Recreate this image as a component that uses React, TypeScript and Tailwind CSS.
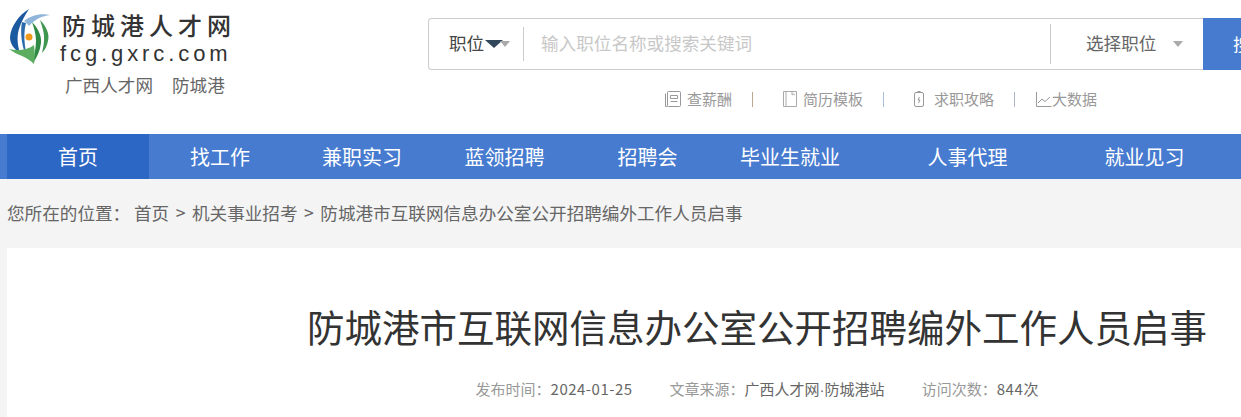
const cjk = "font-['Microsoft_YaHei','Noto_Sans_CJK_SC','Noto_Sans',sans-serif]";

const navItems = [
  { name: "首页", width: "w-[142px]", active: true },
  { name: "找工作", width: "w-[142px]" },
  { name: "兼职实习", width: "w-[142px]" },
  { name: "蓝领招聘", width: "w-[143px]" },
  { name: "招聘会", width: "w-[143px]" },
  { name: "毕业生就业", width: "w-[142px]" },
  { name: "人事代理", width: "w-[213px]" },
  { name: "就业见习", width: "w-[141px]" },
];

const Logo = () => (
  <svg width="42" height="58" viewBox="0 0 42 58" className="shrink-0">
    <path d="M20 1 C10 7 2 18 1 29 C1 36 5 41 11 45 C8 36 8 27 10 21 C12 14 16 7 20 1Z" fill="#1c5a9f" />
    <path d="M13 14 C11 24 13 36 15 42 C16 43 17 42 16 38 C15 30 15 22 17 15Z" fill="#2a6cab" />
    <path d="M15 13 C22 7 32 5 41 7 C33 8 26 11 20 18 C18 16 17 14 15 13Z" fill="#8fb6da" />
    <path d="M23 14 C28 19 33 27 32 35 C31 43 28 49 24 55 C25 47 27 40 27 33 C27 26 25 20 23 14Z" fill="#2f8a45" />
    <path d="M31 12 C37 18 41 26 39 33 C38 38 36 42 33 45 C35 37 36 29 34 22 C33 18 32 15 31 12Z" fill="#3f9650" />
    <path d="M0 41 C9 43 19 42 25 37 C26 44 26 50 25 56 C22 53 18 50 13 48 C8 46 4 44 0 41Z" fill="#5bae60" />
    <circle cx="20" cy="29" r="3.5" fill="#f09a1a" />
  </svg>
);

const Header = () => (
  <header className="flex h-[134px] bg-white">
    <div className="w-[428px] shrink-0 pl-[9px] pt-[8px]">
      <div className="flex gap-[11px]">
        <Logo />
        <div className="pt-[2px]">
          <div className={`${cjk} h-[31px] text-[24px] leading-[30px] tracking-[5px] font-medium text-[#333] whitespace-nowrap`}>防城港人才网</div>
          <div className="font-['Liberation_Sans',sans-serif] -ml-[2px] h-[24px] text-[22px] leading-[26px] tracking-[3.9px] text-[#333] whitespace-nowrap">fcg.gxrc.com</div>
        </div>
      </div>
      <div className={`${cjk} ml-[56px] mt-[7px] flex gap-[19px] text-[17.6px] leading-[24px] text-[#666]`}>
        <span>广西人才网</span>
        <span>防城港</span>
      </div>
    </div>
    <div className="w-[813px] shrink-0 pt-[18px]">
      <div className={`${cjk} flex h-[52px] items-center rounded-l-[4px] border border-r-0 border-[#ccc] text-[17.6px] text-[#666]`}>
        <div className="flex h-[34px] w-[95px] items-center border-r border-[#ccc] pl-[20px]">
          <span className="pb-[2px] text-[#444]">职位</span>
          <span className="ml-[1px] h-0 w-0 border-x-[9px] border-t-[8px] border-x-transparent border-t-[#33475b]" />
          <span className="-ml-[3px] h-0 w-0 border-x-[5px] border-t-[6px] border-x-transparent border-t-[#aaa]" />
        </div>
        <div className="flex-1 pb-[2px] pl-[17px] text-[#c8c8c8]">输入职位名称或搜索关键词</div>
        <div className="flex h-[40px] w-[153px] items-center border-l border-[#ccc] pl-[35px]">
          <span className="pb-[2px]">选择职位</span>
          <span className="ml-[17px] h-0 w-0 border-x-[5px] border-t-[6px] border-x-transparent border-t-[#aaa]" />
        </div>
        <div className="flex h-[52px] w-[38px] shrink-0 items-center overflow-hidden whitespace-nowrap bg-[#467bd0] pl-[30px] text-white">搜索</div>
      </div>
      <div className={`${cjk} ml-[236px] mt-[19px] flex items-center text-[15px] leading-[20px] text-[#999]`}>
        <svg width="18" height="18" viewBox="0 0 18 18" fill="none" stroke="#999" strokeWidth="1" className="mr-[5px]">
          <rect x="3.5" y="1.5" width="13" height="15" rx="1" />
          <path d="M1.5 3.5V16.5H3.5M6.5 5.5H13.5V8.5H6.5ZM6.5 11.5H13.5" />
        </svg>
        <span>查薪酬</span>
        <span className="mx-[20px] h-[15px] w-px bg-[#b9a98f]" />
        <svg width="18" height="18" viewBox="0 0 18 18" fill="none" stroke="#aaa" strokeWidth="1" className="ml-[8px] mr-[4px]">
          <path d="M2.5 1.5H15.5V16.5H2.5ZM5 1.5V16.5M11 1.5V5L12.5 4L14 5" />
        </svg>
        <span>简历模板</span>
        <span className="mx-[20px] h-[15px] w-px bg-[#a9c0d8]" />
        <svg width="16" height="18" viewBox="0 0 16 18" fill="none" stroke="#999" strokeWidth="1" className="ml-[7px] mr-[7px]">
          <rect x="3.5" y="2.5" width="9" height="14" rx="1.5" />
          <path d="M6.5 1.5H9.5M8.5 7L7 10H9L7.5 13" />
        </svg>
        <span>求职攻略</span>
        <span className="mx-[20px] h-[15px] w-px bg-[#a9b5c2]" />
        <svg width="17" height="18" viewBox="0 0 17 18" fill="none" stroke="#999" strokeWidth="1">
          <path d="M1.5 2V16.5H16.5M3 13L7 9L10 11.5L15 7" />
        </svg>
        <span>大数据</span>
      </div>
    </div>
  </header>
);

const App = () => {
  return (
    <div className={`${cjk} h-[417px] w-[1241px] overflow-hidden bg-[#f4f4f4]`}>
      <Header />
      <nav className="flex h-[45px] bg-[#467bd0] pl-[7px]">
        {navItems.map((item) => (
          <a
            key={item.name}
            className={`${item.width} flex shrink-0 items-center justify-center text-[20px] text-white ${item.active ? "bg-[#2d67c5]" : ""}`}
          >
            {item.name}
          </a>
        ))}
      </nav>
      <main className="ml-[7px] w-[1500px]">
        <div className="flex h-[69px] items-center whitespace-nowrap text-[17.6px] text-[#666]">
          <span className="mr-[3px] w-[124px]">您所在的位置：</span>
          <span>首页</span>
          <span className="mx-[6.5px]">&gt;</span>
          <span>机关事业招考</span>
          <span className="mx-[6.5px]">&gt;</span>
          <span>防城港市互联网信息办公室公开招聘编外工作人员启事</span>
        </div>
        <article className="h-[300px] bg-white pt-[50px] text-center">
          <h1 className="text-[37.5px] leading-[56px] text-[#333]">防城港市互联网信息办公室公开招聘编外工作人员启事</h1>
          <div className="mt-[25px] flex justify-center gap-[37px] text-[15px] leading-[20px] text-[#999]">
            <span>发布时间：<span className="tracking-[0.5px] text-[#666]">2024-01-25</span></span>
            <span>文章来源：<span className="text-[#666]">广西人才网<span className="font-['Liberation_Sans',sans-serif]">·</span>防城港站</span></span>
            <span>访问次数：<span className="text-[#666]"><span className="tracking-[0.6px]">844</span>次</span></span>
          </div>
        </article>
      </main>
    </div>
  );
};

export default App;
